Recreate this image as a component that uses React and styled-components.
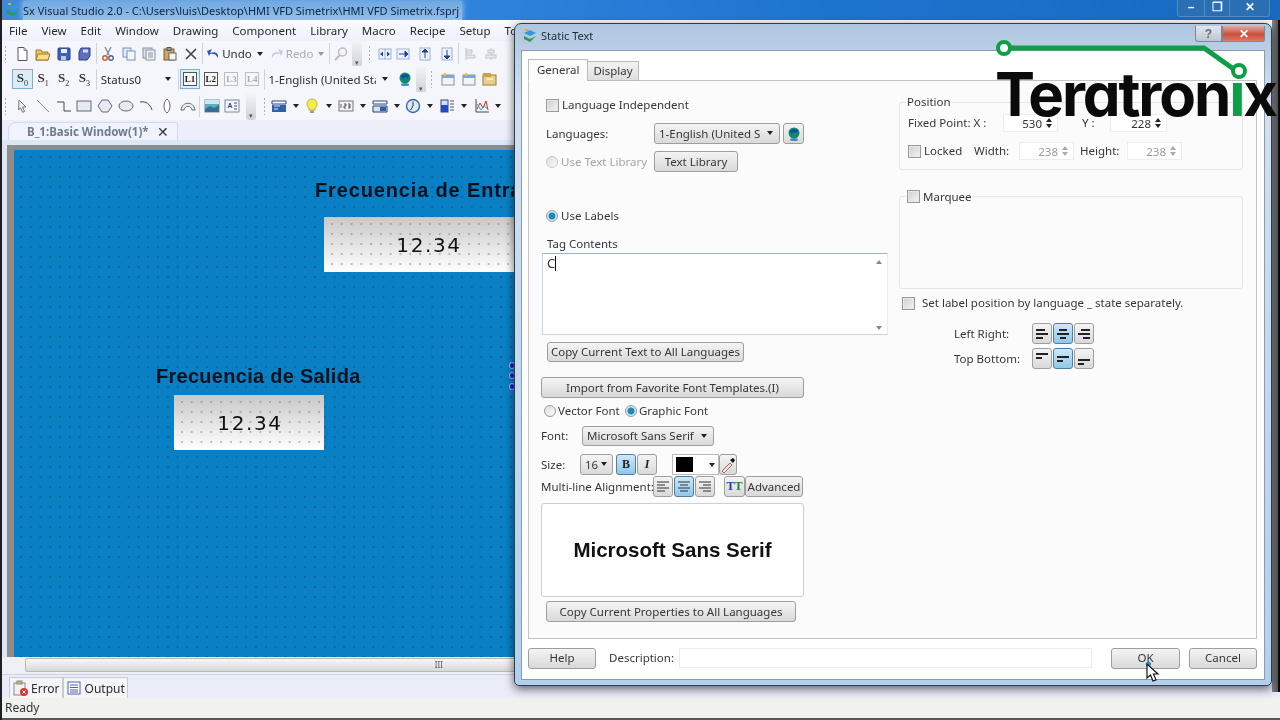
import React from 'react';
import styled, { createGlobalStyle, css } from 'styled-components';

const Global = createGlobalStyle`
  html, body { margin: 0; padding: 0; background: #f1f1f1; }
  body { font-family: "Noto Sans", "Liberation Sans", sans-serif; font-size: 11.5px; color: #333; }
  * { box-sizing: border-box; }
`;

const Screen = styled.div`
  position: relative; width: 1280px; height: 720px; overflow: hidden; background: #eef0fa; filter: blur(0.35px);
`;
const MainWindow = styled.div`
  display: flex; flex-direction: column; width: 1280px; height: 720px; border-left: 2px solid #1c1f24;
`;
const RightEdge = styled.div`
  position: absolute; left: 1272px; top: 20px; width: 8px; height: 672px;
  background: linear-gradient(90deg, #8a8a8a 0, #55585c 70%, #0c0c0c 78%);
`;
const TitleBar = styled.div`
  height: 20px; flex: none; display: flex; align-items: center; gap: 2px; padding-left: 3px;
  background: linear-gradient(90deg, #3d8ad6 0%, #2f84dc 35%, #1d74cf 65%, #1769bf 100%);
  color: #10233c; font-size: 11px;
`;
const TitleText = styled.span`
  background: linear-gradient(#7eb0e2cc, #a9cdf0cc); padding: 0 3px 0 0; line-height: 19px; box-shadow: 0 0 6px #a9cdf0;
`;
const WinButtons = styled.div`
  position: absolute; top: 0; right: 10px; height: 17px; display: flex; color: #eef4fc; font: 700 12px "Liberation Sans", sans-serif;
  background: #2a6fb2; border: 1px solid #4f8cc6; border-top: 0; border-radius: 0 0 3px 3px;
`;
const WinBtn = styled.span`
  width: ${p => p.$w}px; text-align: center; line-height: 15px; border-left: 1px solid #4f8cc6;
  &:first-child { border-left: 0; }
`;
const MenuBar = styled.div`
  height: 21px; flex: none; display: flex; align-items: center; padding-left: 7px; gap: 14px;
  background: linear-gradient(#fafbff, #eff1fa); font-size: 11.5px; color: #26282c;
`;
const ToolRow = styled.div`
  height: ${p => p.$h}px; flex: none; display: flex; align-items: center; padding-left: ${p => p.$pl ?? 2}px;
  background: #f5f6fb;
`;
const Tool = styled.div`
  width: ${p => p.$w || 20.7}px; height: 20px; flex: none; display: flex; align-items: center; justify-content: center;
  ${p => p.$active && css`background: #dcedfa; border: 1px solid #7fb0d4;`}
  ${p => p.$off && css`opacity: .35;`}
`;
const Sep = styled.div`width: 1px; height: 21px; background: #cfd3dc; margin: 0 ${p => p.$m ?? 1}px; flex: none;`;
const Grip = styled.div`
  width: 3px; height: 18px; margin: 0 5px 0 ${p => p.$l ?? 4}px; flex: none;
  background-image: radial-gradient(circle, #a8adb8 0.8px, transparent 1px); background-size: 3px 4px;
`;
const Over = styled.div`
  width: 10px; height: 27px; flex: none; background: linear-gradient(#f3f4f8, #d0d2d8); border-radius: 0 0 3px 3px; margin-left: ${p => p.$l ?? 0}px;
  display: flex; align-items: flex-end; justify-content: center; font-size: 7px; color: #555; line-height: 9px;
`;
const ToolText = styled.span`
  flex: none; font-size: 11.5px; color: ${p => p.$off ? '#a9abb2' : '#2a2c30'}; width: ${p => p.$w ? p.$w + 'px' : 'auto'}; overflow: hidden; white-space: nowrap; padding-left: ${p => p.$pl || 0}px;
`;
const Caret = styled.span`
  flex: none; width: 0; height: 0; border: 3px solid transparent; border-top: 4px solid ${p => p.$c || '#222'}; border-bottom: 0;
  margin: 0 ${p => p.$r ?? 5}px 0 ${p => p.$l ?? 5}px;
`;
const DocTabRow = styled.div`height: 20px; flex: none; background: #eceffa; padding: 2px 0 0 6px;`;
const DocTab = styled.div`
  width: 170px; height: 18px; background: #f0f3fb; border: 1px solid #cfdcee; border-bottom: 0; border-radius: 8px 3px 0 0;
  display: flex; align-items: center; padding-left: 18px; gap: 8px; font-weight: 700; font-size: 11.5px; color: #6f7c8f; white-space: nowrap;
  span:last-child { color: #333; font-weight: 400; font-size: 14px; }
`;
const CanvasFrame = styled.div`
  height: 517px; flex: none; margin: 0; background: #dce6f5; padding: 5px 0 0 5px;
`;
const CanvasGrey = styled.div`height: 512px; background: #8d8d8d; padding: 5px 0 0 7px;`;
const Canvas = styled.div`
  position: relative; height: 507px; background-color: #0a80c4; overflow: hidden;
  background-image: radial-gradient(circle, #07598c 0.55px, transparent 0.95px); background-size: 9.8px 10px; background-position: 2px 2px;
`;
const CanvasLabel = styled.div`
  position: absolute; left: ${p => p.$x}px; top: ${p => p.$y}px; white-space: nowrap;
  font: 700 20px "Liberation Sans", sans-serif; color: #04111d; letter-spacing: ${p => p.$ls ?? 0.28}px;
`;
const Display = styled.div`
  position: absolute; left: ${p => p.$x}px; top: ${p => p.$y}px; width: ${p => p.$w}px; height: 55px;
  display: flex; align-items: center; justify-content: center; padding: 1px 0 0 2px;
  font: 400 20px "DejaVu Sans", sans-serif; letter-spacing: 1.6px; color: #111;
  background-image: radial-gradient(circle, #6c7076 0.5px, transparent 0.85px), linear-gradient(#c8c8c8, #ffffff);
  background-size: 9.8px 10px, 100% 100%; background-position: 3px 2px, 0 0;
`;
const Handle = styled.div`
  position: absolute; left: 495px; top: ${p => p.$y}px; width: 6px; height: 7px; border-radius: 50%; background: #1418c8; border: 1px solid #9fb4ff;
`;
const HScroll = styled.div`
  height: 18px; flex: none; background: #eef0f6; padding: 1px 0 0 23px; border-bottom: 1px solid #c5d7ef;
`;
const HThumb = styled.div`
  height: 14px; background: linear-gradient(#f7f7f7, #d8d8d8); border: 1px solid #b8b8b8; border-radius: 2px;
  display: flex; align-items: center; justify-content: flex-end; padding-right: 836px; font-size: 8px; color: #555; line-height: 10px;
`;
const OutTabs = styled.div`height: 23px; flex: none; display: flex; padding: 2px 0 0 7px; background: #eaecf9;`;
const OutTab = styled.div`
  display: flex; align-items: center; gap: 3px; height: 21px; padding: 0 2px; border: 1px solid #c9cbd4; border-width: 1px 1px 0 1px; background: #f4f5f9;
  font-size: 12px; color: #2a2c30;
`;
const StatusBar = styled.div`height: 20px; flex: none; padding: 0 0 0 3px; line-height: 20px; background: #f1f1ee; font-size: 12px; color: #33353a;`;
const StatusEdge = styled.div`flex: 1; background: #55585c;`;

const Dialog = styled.div`
  position: absolute; left: 514px; top: 23px; width: 758px; height: 663px; display: flex; flex-direction: column;
  border: 1px solid #2d3e52; border-radius: 7px 7px 5px 5px; padding: 0 6px 5px;
  background: linear-gradient(#aec6e0, #d2e0ee 12%, #b2d0ee 100%);
  box-shadow: 0 3px 10px rgba(0,0,0,.6);
`;
const DlgTitle = styled.div`height: 26px; flex: none; display: flex; align-items: center; gap: 3px; padding: 0 0 3px 1px; font-size: 11px; color: #1f2933;`;
const DlgCtrl = styled.div`position: absolute; right: 6px; top: 2px; display: flex; height: 16px;`;
const CtrlBtn = styled.div`
  width: ${p => p.$w}px; display: flex; align-items: center; justify-content: center; color: #fff; font: 700 12px "Liberation Sans", sans-serif;
  border: 1px solid #7b8796; border-top: 0; border-radius: ${p => p.$r};
  background: ${p => p.$red ? 'linear-gradient(#e9a79c, #c9503c 55%, #d97b68)' : 'linear-gradient(#dfe6ee, #bcc6d2)'};
  color: ${p => p.$red ? '#fff' : '#667'};
`;
const Client = styled.div`
  flex: 1; min-height: 0; background: #fff; border: 1px solid #8a9bad; padding: 8px 7px 0 6px; display: flex; flex-direction: column;
`;
const TabStrip = styled.div`display: flex; height: 22px; flex: none; align-items: flex-end; position: relative; z-index: 1; margin-bottom: -1px;`;
const Tab = styled.div`
  height: ${p => p.$on ? 22 : 20}px; padding: 0 ${p => p.$on ? 8 : 5}px 2px; display: flex; align-items: center; font-size: 11.5px; color: #33363a;
  border: 1px solid #bbb; border-bottom: ${p => p.$on ? '1px solid #fbfbfb' : '1px solid #bbb'};
  background: ${p => p.$on ? '#fbfbfb' : 'linear-gradient(#f3f3f3, #dedede)'}; margin-left: ${p => p.$on ? 0 : -1}px;
`;
const Pane = styled.div`
  height: 559px; flex: none; border: 1px solid #c4c4c4; background: #fbfbfb; display: flex;
`;
const LeftCol = styled.div`width: 370px; flex: none; display: flex; flex-direction: column; padding: 0 0 0 12px;`;
const RightCol = styled.div`width: 344px; flex: none; display: flex; flex-direction: column; padding-top: 15px;`;
const Row = styled.div`
  display: flex; align-items: center; height: ${p => p.$h}px; margin-top: ${p => p.$t || 0}px; padding-left: ${p => p.$l || 0}px; flex: none;
`;
const Text = styled.span`
  flex: none; white-space: nowrap; font-size: 11.5px; line-height: 15px; padding-bottom: 1px; color: ${p => p.$off ? '#a4a6aa' : '#33363a'};
  ${p => p.$w && css`width: ${p.$w}px;`} margin-left: ${p => p.$m || 0}px;
`;
const CheckBox = styled.span`
  flex: none; width: 13px; height: 13px; border: 1px solid #9a9a9a; background: linear-gradient(135deg, #cfcfcf, #f4f4f4); box-shadow: inset 0 0 0 1px #e8e8e8;
  margin-right: ${p => p.$r ?? 4}px;
`;
const RadioDot = styled.span`
  flex: none; width: 12px; height: 12px; border-radius: 50%; border: 1px solid ${p => p.$off ? '#c8c8c8' : '#9a9a9a'}; margin: 0 ${p => p.$r ?? 3}px 0 ${p => p.$l || 0}px;
  background: ${p => p.$on ? 'radial-gradient(circle, #1b8bb8 0 3px, #d8e8f0 4px)' : 'linear-gradient(135deg,#ddd,#fafafa)'};
`;
const Btn = styled.div`
  flex: none; width: ${p => p.$w}px; height: ${p => p.$h || 21}px; margin-left: ${p => p.$m || 0}px; display: flex; align-items: center; justify-content: center;
  border: 1px solid #9e9e9e; border-radius: 3px; background: linear-gradient(#f4f4f4, #d9d9d9); font-size: 11.5px; padding-bottom: 1px; color: #33363a; white-space: nowrap;
  ${p => p.$on && css`background: linear-gradient(#cfe8f8, #8fc8ea); border-color: #4e7fa0;`}
`;
const Select = styled(Btn)`justify-content: space-between; padding: 0 5px 1px 4px; overflow: hidden;`;
const TextBox = styled.div`
  flex: none; width: 346px; height: 82px; margin-left: 1px; background: #fff; border: 1px solid #c9d6e4; border-top-color: #9cb4cc; border-right-color: #ececec;
  display: flex; justify-content: space-between; padding: 2px 5px 4px 4px;
`;
const TypeText = styled.span`font-size: 13px; line-height: 15px; height: 15px; color: #333; border-right: 1px solid #111;`;
const ScrollArrows = styled.div`display: flex; flex-direction: column; justify-content: space-between; padding-top: 4px;`;
const Arrow = styled.span`
  display: block; width: 0; height: 0; border: 3px solid transparent;
  ${p => p.$up ? 'border-bottom: 4px solid #888; border-top: 0;' : 'border-top: 4px solid #888; border-bottom: 0;'}
`;
const Preview = styled.div`
  flex: none; width: 263px; height: 94px; display: flex; align-items: center; justify-content: center;
  background: #fff; border: 1px solid #cfcfcf; border-radius: 3px; font: 700 20.5px "Liberation Sans", sans-serif; color: #111;
`;
const Group = styled.fieldset`
  margin: ${p => p.$t || 0}px 0 0; padding: 0 0 0 8px; width: 344px; height: ${p => p.$h}px; border: 1px solid #e5e5e5; border-radius: 3px; flex: none; min-width: 0;
  legend { padding: 0 1px; margin-left: -2px; font-size: 11.5px; line-height: 12px; color: #33363a; display: flex; align-items: center; }
`;
const Spin = styled.div`
  flex: none; width: ${p => p.$w}px; height: 18px; margin-left: ${p => p.$m || 0}px; display: flex; align-items: center; justify-content: flex-end; gap: 4px;
  padding-right: 4px; background: #fff; border: 1px solid #ededed; font-size: 11.5px; color: ${p => p.$off ? '#9a9a9a' : '#333'};
`;
const SpinArrows = styled.span`display: flex; flex-direction: column; gap: 2px; width: 7px;`;
const SmallUp = styled.span`
  display: block; width: 0; height: 0; border: 3.5px solid transparent;
  ${p => p.$up ? `border-bottom: 4px solid ${p.$c}; border-top: 0;` : `border-top: 4px solid ${p.$c}; border-bottom: 0;`}
`;
const BtnGroup = styled.div`display: flex; gap: 1px; margin-left: ${p => p.$m || 0}px; flex: none;`;
const IconBtn = styled(Btn)`width: ${p => p.$w || 20}px; padding: 0;`;
const ColorBtn = styled.div`
  flex: none; width: 47px; height: 21px; margin-left: 15px; background: #fff; border: 1px solid #bbb; display: flex; align-items: center; padding-left: 3px; gap: 8px;
`;
const Swatch = styled.div`width: 17px; height: 15px; background: #000;`;
const SerifMark = styled.span`
  font: ${p => p.$i ? 'italic ' : ''}700 12px "Liberation Serif", serif; color: ${p => p.$c || '#222'};
`;
const Footer = styled.div`display: flex; align-items: center; height: 22px; margin-top: 8px; flex: none;`;
const DescInput = styled.div`width: 413px; height: 20px; margin-left: 0; background: #fff; border: 1px solid #ececec; flex: none;`;
const Logo = styled.div`position: absolute; left: 995px; top: 38px; width: 285px; height: 90px;`;
const LogoWord = styled.div`
  position: absolute; left: 0; top: 26px; font: 700 60px/1 "Inter", "Liberation Sans", sans-serif; color: #0a0a0a; letter-spacing: -2.1px;
  font-feature-settings: "cv11" 1; white-space: nowrap;
  span { color: #0f9e48; }
`;
const LogoLine = styled.svg`position: absolute; left: 0; top: 0; z-index: 1;`;
const Pointer = styled.svg`position: absolute; left: 1146px; top: 661px;`;

const I = ({ n }) => {
  const g = {
    doc: <><path d="M4 1.500h6l3 3v10H4z" fill="#fff" stroke="#555"/><path d="M10 1.500v3h3" fill="none" stroke="#888"/></>,
    open: <><path d="M1 4h5l1 2h6v8H1z" fill="#e8c66a" stroke="#a07a25"/><path d="M3 8h12l-2 6H1z" fill="#f6dc8c" stroke="#a07a25"/></>,
    save: <><rect x="2" y="2" width="12" height="12" rx="1" fill="#3f5fb8" stroke="#27407f"/><rect x="5" y="3" width="6" height="4" fill="#e8eefb"/><rect x="5" y="10" width="5" height="4" fill="#b8c6e8"/></>,
    saveall: <><path d="M5 2h9v8l-3 4H3V6z" fill="#5a6fc0" stroke="#2d3f85"/><rect x="7" y="3.500" width="5" height="3" fill="#d6def5"/></>,
    cut: <><path d="M5 1l4 8M11 1L7 9" stroke="#7f8aa0" strokeWidth="1.400"/><circle cx="5" cy="12" r="2.200" fill="none" stroke="#c05b2a" strokeWidth="1.400"/><circle cx="11" cy="12" r="2.200" fill="none" stroke="#4d5f9a" strokeWidth="1.400"/></>,
    copy: <><rect x="2" y="2" width="8" height="9" fill="#dfe9f7" stroke="#7b93b8"/><rect x="6" y="5" width="8" height="9" fill="#f2f6fd" stroke="#7b93b8"/></>,
    copy2: <><rect x="2" y="2" width="9" height="10" fill="#d9dee8" stroke="#8a93a6"/><rect x="5" y="4" width="9" height="10" fill="#eef0f6" stroke="#8a93a6"/><path d="M7 7h5M7 9h5M7 11h5" stroke="#8a93a6"/></>,
    paste: <><rect x="2" y="3" width="10" height="11" fill="#c8a862" stroke="#7a5c22"/><rect x="5" y="1.500" width="4" height="3" fill="#999" stroke="#555"/><rect x="7" y="7" width="7" height="7" fill="#f5f5f5" stroke="#666"/></>,
    x: <path d="M3 3l10 10M13 3L3 13" stroke="#444" strokeWidth="1.600"/>,
    undo: <path d="M13 12c1-5-3-7-8-5L7 3 2 5l2 5 1-2c4-1 6 0 8 4z" fill="#2f55a8"/>,
    redo: <path d="M3 12c-1-5 3-7 8-5L9 3l5 2-2 5-1-2c-4-1-6 0-8 4z" fill="#c3cddd"/>,
    find: <><circle cx="9.500" cy="6" r="4" fill="#f4f4f4" stroke="#bbb" strokeWidth="1.400"/><path d="M7 9l-5 5" stroke="#bbb" strokeWidth="2"/></>,
    ah: <><rect x="2" y="3" width="12" height="10" fill="#eef3fb" stroke="#9db1d0"/><path d="M8 3v10" stroke="#9db1d0"/><path d="M3 8l3-2.500v5zM13 8l-3-2.500v5z" fill="#23439a"/></>,
    ar: <><rect x="2" y="3" width="12" height="10" fill="#eef3fb" stroke="#9db1d0"/><path d="M4 8h6M13 8l-3-3v6z" stroke="#23439a" fill="#23439a"/></>,
    au: <><rect x="3" y="2" width="10" height="12" fill="#eef3fb" stroke="#9db1d0"/><path d="M8 5v7M8 3L5 6h6z" stroke="#23439a" fill="#23439a"/></>,
    ad: <><rect x="3" y="2" width="10" height="12" fill="#eef3fb" stroke="#9db1d0"/><path d="M8 4v7M8 13l-3-3h6z" stroke="#23439a" fill="#23439a"/></>,
    fa: <path d="M3 2v12M3 4h6v3H3M3 9h9v3H3" fill="#e6e8ee" stroke="#c0c4cc"/>,
    fb: <><path d="M8 2v12" stroke="#c0c4cc"/><rect x="5" y="4" width="6" height="3" fill="#e6e8ee" stroke="#c0c4cc"/><rect x="3" y="9" width="10" height="3" fill="#e6e8ee" stroke="#c0c4cc"/></>,
    win: <><rect x="2" y="4" width="12" height="10" fill="#f4f4f2" stroke="#8a8f98"/><rect x="2" y="4" width="12" height="3" fill="#7da6d6"/><path d="M5 1.500l2 2-2 2-2-2z" fill="#f2c23c"/></>,
    folder: <><rect x="2" y="4" width="13" height="10" fill="#e8d08c" stroke="#9a7c30"/><rect x="2" y="2" width="8" height="4" fill="#c9a24a"/><path d="M6 8h6" stroke="#fff"/></>,
    cursor: <path d="M5 2l7 7H8.500l2 4.500-2 .8-2-4.500L4.500 12z" fill="#f0f0f0" stroke="#777"/>,
    line: <path d="M2 2l12 12" stroke="#888"/>,
    step: <path d="M1 4h7v9h7" fill="none" stroke="#444"/>,
    rect: <rect x="1" y="3" width="14" height="10" fill="#e5ebf4" stroke="#666"/>,
    hex: <path d="M5 2h6l4 6-4 6H5L1 8z" fill="#e5ebf4" stroke="#666"/>,
    ell: <ellipse cx="8" cy="8" rx="7" ry="5" fill="#e5ebf4" stroke="#666"/>,
    arc: <path d="M2 4c6-1 10 2 12 8" fill="none" stroke="#444"/>,
    dia: <path d="M8 1c4 3 4 11 0 14-4-3-4-11 0-14z" fill="#fff" stroke="#666"/>,
    arc2: <path d="M1 12C2 3 14 3 15 12h-3C11 7 5 7 4 12z" fill="#eef1f6" stroke="#666"/>,
    img: <><rect x="1" y="2" width="14" height="12" fill="#5bb0c9" stroke="#7a8a9a"/><path d="M1 11l5-3 4 2 5-3v7H1z" fill="#35708f"/><rect x="1" y="2" width="14" height="4" fill="#cfe6ee"/></>,
    txt: <><rect x="1" y="2" width="14" height="12" fill="#f3f5f9" stroke="#7a8a9a"/><path d="M4 10l2-5 2 5M4.800 8.500h2.500M10 5h3M10 8h3M10 11h3" stroke="#2c4d8a" fill="none"/></>,
    hhh: <><path d="M1 3h14v3H1z" fill="#fff" stroke="#29447f"/><rect x="1" y="7" width="14" height="7" fill="#2f60b0"/><path d="M3 8h6M3 11h4" stroke="#d9e6f7"/></>,
    bulb: <><path d="M8 1a5 5 0 0 1 3 9v2H5v-2a5 5 0 0 1 3-9z" fill="#f6ec50" stroke="#c7b52a"/><rect x="6" y="12.500" width="4" height="2.500" fill="#999"/></>,
    num: <><rect x="1" y="3" width="14" height="10" fill="#f3f3f3" stroke="#777"/><path d="M3 6v4M6 6h2v2H6v2h2M10 6h2v4h-2M10 8h2" stroke="#333" fill="none" strokeWidth=".8"/></>,
    hhh2: <><path d="M1 3h14v3H1z" fill="#fff" stroke="#29447f"/><path d="M1 8h14v6H1z" fill="#d8e1ef" stroke="#29447f"/><rect x="8" y="9" width="6" height="4" fill="#2f60b0"/></>,
    clock: <><circle cx="8" cy="8" r="6.500" fill="#dce9f8" stroke="#2f6aa8" strokeWidth="1.400"/><path d="M8 3.500V8l-2.500 4" fill="none" stroke="#333"/></>,
    bar: <><rect x="1" y="2" width="7" height="12" fill="#d8e2f5" stroke="#28459a"/><rect x="1" y="7" width="7" height="7" fill="#2448c2"/><path d="M10 3h4M10 6h4M10 9h4M10 12h4" stroke="#555"/></>,
    chart: <><path d="M2 1v13h13" fill="none" stroke="#444"/><path d="M3 11l3-6 3 5 3-7 2 9" fill="none" stroke="#d22"/><path d="M3 6l4 6 3-4 4 3" fill="none" stroke="#2aa"/></>,
    globe: <><circle cx="8" cy="7" r="5.500" fill="#118a68"/><path d="M4 5a5 3 0 0 1 8-1l-1 3-4-1-1 3z" fill="#0a4fb0"/><ellipse cx="8" cy="13.500" rx="4" ry="1.500" fill="#3e8bd8"/></>,
    logo: <><path d="M8 2l6 3-6 3-6-3z" fill="#2f9ad6"/><path d="M2 8l6 3 6-3-6 6-6-3z" fill="#2a9a4e"/><path d="M3 1h3v2H3z" fill="#e8a83a"/></>,
    errpad: <><rect x="2" y="3" width="11" height="12" fill="#f1f1f1" stroke="#888"/><rect x="5" y="1" width="5" height="3" fill="#cdb26d" stroke="#888"/><circle cx="12" cy="12" r="4" fill="#d33"/><path d="M10.500 10.500l3 3M13.500 10.500l-3 3" stroke="#fff"/></>,
    list: <><rect x="2" y="2" width="12" height="12" fill="#fff" stroke="#4a63ab"/><path d="M4 5h8M4 7.500h8M4 10h8M4 12h8" stroke="#4a63ab"/></>,
    al: <path d="M2 3h12M2 6h8M2 9h12M2 12h8" stroke="#333"/>,
    ac: <path d="M2 3h12M4 6h8M2 9h12M4 12h8" stroke="#333"/>,
    ar2: <path d="M2 3h12M6 6h8M2 9h12M6 12h8" stroke="#333"/>,
    lr1: <path d="M2 3h9v2H2zM2 7h12v2H2zM2 11h7v2H2z" fill="#222"/>,
    lr2: <path d="M4 3h8v2H4zM2 7h12v2H2zM5 11h6v2H5z" fill="#222"/>,
    lr3: <path d="M5 3h9v2H5zM2 7h12v2H2zM7 11h7v2H7z" fill="#222"/>,
    tb1: <path d="M2 2h12v2H2zM2 6h6v2H2z" fill="#222"/>,
    tb2: <path d="M2 5h12v2H2zM2 9h6v2H2z" fill="#222"/>,
    tb3: <path d="M2 8h12v2H2zM2 12h6v2H2z" fill="#222"/>,
    pick: <><path d="M2 14L10 6l2 2-8 8z" fill="#f8e2e2" stroke="#a66"/><path d="M10 3l3-2 2 2-2 3z" fill="#111"/></>,
  };
  return <svg width="16" height="16" viewBox="0 0 16 16">{g[n]}</svg>;
};

const SLabel = styled.span`
  font: 700 13px "Liberation Serif", serif; color: #333;
  sub { font-size: 8px; font-weight: 400; }
`;
const LLabel = styled.span`
  width: 14px; height: 14px; border: 1px solid #555; background: #f6f6f6; font: 700 9px/12px "Liberation Serif", serif; text-align: center; color: #222;
`;

const Chk = ({ children, r }) => <><CheckBox $r={r} />{children}</>;

export default function App() {
  return (
    <Screen>
      <Global />
      <MainWindow>
        <TitleBar><I n="logo" /><TitleText>Sx Visual Studio 2.0 - C:\Users\luis\Desktop\HMI VFD Simetrix\HMI VFD Simetrix.fsprj</TitleText></TitleBar>
        <WinButtons><WinBtn $w={26}>–</WinBtn><WinBtn $w={25}>❐</WinBtn><WinBtn $w={40}>✕</WinBtn></WinButtons>
        <MenuBar>
          {['File','View','Edit','Window','Drawing','Component','Library','Macro','Recipe','Setup','Tools'].map(m => <span key={m}>{m}</span>)}
        </MenuBar>
        <ToolRow $h={25}>
          <Grip $l={0} />
          {['doc','open','save','saveall'].map(n => <Tool key={n}><I n={n} /></Tool>)}
          <Sep />
          {['cut','copy','copy2','paste','x'].map(n => <Tool key={n}><I n={n} /></Tool>)}
          <Sep />
          <Tool $w={18}><I n="undo" /></Tool><ToolText>Undo</ToolText><Caret />
          <Tool $w={18}><I n="redo" /></Tool><ToolText $off>Redo</ToolText><Caret $c="#999" />
          <Sep $m={0} />
          <Tool><I n="find" /></Tool>
          <Over $l={1}>▾</Over>
          <Grip $l={6} />
          <Tool $w={17}><I n="ah" /></Tool><Tool $w={20}><I n="ar" /></Tool><Tool $w={24}><I n="au" /></Tool><Tool $w={20}><I n="ad" /></Tool>
          <Sep />
          <Tool $w={21}><I n="fa" /></Tool><Tool><I n="fb" /></Tool>
        </ToolRow>
        <ToolRow $h={26} $pl={10}>
          <Tool $active><SLabel>S<sub>0</sub></SLabel></Tool>
          <Tool><SLabel>S<sub>1</sub></SLabel></Tool><Tool><SLabel>S<sub>2</sub></SLabel></Tool><Tool><SLabel>S<sub>3</sub></SLabel></Tool>
          <Sep />
          <ToolText $w={64} $pl={3}>Status0</ToolText><Caret $l={3} $r={6} />
          <Sep />
          <Tool $active><LLabel>L1</LLabel></Tool><Tool><LLabel>L2</LLabel></Tool><Tool $off><LLabel>L3</LLabel></Tool><Tool $off><LLabel>L4</LLabel></Tool>
          <Sep />
          <ToolText $w={110} $pl={3}>1-English (United Sta</ToolText><Caret $l={6} $r={7} />
          <Tool $w={20}><I n="globe" /></Tool>
          <Over $l={1}>▾</Over>
          <Grip $l={4} />
          <Tool><I n="win" /></Tool><Tool><I n="win" /></Tool><Tool><I n="folder" /></Tool>
        </ToolRow>
        <ToolRow $h={28}>
          <Grip $l={0} />
          {['cursor','line','step','rect','hex','ell','arc','dia','arc2'].map(n => <Tool key={n}><I n={n} /></Tool>)}
          <Sep />
          <Tool><I n="img" /></Tool><Tool><I n="txt" /></Tool>
          <Over $l={3}>▾</Over>
          <Grip $l={7} />
          <Tool $w={16}><I n="hhh" /></Tool><Caret $l={6} $r={3} />
          <Tool $w={20}><I n="bulb" /></Tool><Caret $l={4} $r={4} />
          <Tool $w={20}><I n="num" /></Tool><Caret $l={4} $r={4} />
          <Tool $w={20}><I n="hhh2" /></Tool><Caret $l={4} $r={4} />
          <Tool $w={18}><I n="clock" /></Tool><Caret $l={5} $r={4} />
          <Tool $w={22}><I n="bar" /></Tool><Caret $l={2} $r={4} />
          <Tool $w={22}><I n="chart" /></Tool><Caret $l={2} $r={3} />
        </ToolRow>
        <DocTabRow><DocTab><span>B_1:Basic Window(1)*</span><span>✕</span></DocTab></DocTabRow>
        <CanvasFrame>
          <CanvasGrey>
            <Canvas>
              <CanvasLabel $x={301} $y={29} $ls={0.85}>Frecuencia de Entrada</CanvasLabel>
              <Display $x={310} $y={67} $w={208}>12.34</Display>
              <CanvasLabel $x={142} $y={215}>Frecuencia de Salida</CanvasLabel>
              <Display $x={160} $y={245} $w={150}>12.34</Display>
              <Handle $y={212} /><Handle $y={222} /><Handle $y={233} />
            </Canvas>
          </CanvasGrey>
        </CanvasFrame>
        <HScroll><HThumb>III</HThumb></HScroll>
        <OutTabs>
          <OutTab><I n="errpad" /> Error</OutTab>
          <OutTab><I n="list" /> Output</OutTab>
        </OutTabs>
        <StatusBar>Ready</StatusBar>
        <StatusEdge />
      </MainWindow>

      <RightEdge />

      <Dialog>
        <DlgTitle><I n="logo" />Static Text</DlgTitle>
        <DlgCtrl>
          <CtrlBtn $w={27} $r="0 0 0 3px">?</CtrlBtn>
          <CtrlBtn $w={43} $r="0 0 3px 0" $red>✕</CtrlBtn>
        </DlgCtrl>
        <Client>
          <TabStrip><Tab $on>General</Tab><Tab>Display</Tab></TabStrip>
          <Pane>
            <LeftCol>
              <Row $h={20} $t={14} $l={5}><Chk r={3}><Text>Language Independent</Text></Chk></Row>
              <Row $h={21} $t={8} $l={5}><Text $w={108}>Languages:</Text>
                <Select $w={126}>1-English (United S<Caret $l={2} $r={1} /></Select>
                <IconBtn $w={21} $m={3}><I n="globe" /></IconBtn>
              </Row>
              <Row $h={21} $t={7} $l={5}><RadioDot $off /><Text $off $w={93}>Use Text Library</Text><Btn $w={84}>Text Library</Btn></Row>
              <Row $h={20} $t={34} $l={5}><RadioDot $on /><Text>Use Labels</Text></Row>
              <Row $h={17} $t={9} $l={6}><Text>Tag Contents</Text></Row>
              <Row $h={82} $t={1}>
                <TextBox><TypeText>C</TypeText><ScrollArrows><Arrow $up /><Arrow /></ScrollArrows></TextBox>
              </Row>
              <Row $h={20} $t={7} $l={6}><Btn $w={197} $h={20}>Copy Current Text to All Languages</Btn></Row>
              <Row $h={21} $t={15}><Btn $w={263}>Import from Favorite Font Templates.(I)</Btn></Row>
              <Row $h={18} $t={4} $l={3}><RadioDot $r={2} /><Text $w={67}>Vector Font</Text><RadioDot $on $r={2} /><Text>Graphic Font</Text></Row>
              <Row $h={20} $t={6}><Text $w={41}>Font:</Text><Select $w={132} $h={20}>Microsoft Sans Serif<Caret $l={2} $r={1} /></Select></Row>
              <Row $h={21} $t={8}><Text $w={39}>Size:</Text>
                <Select $w={33}>16<Caret $l={2} $r={0} /></Select>
                <IconBtn $m={3} $on><SerifMark>B</SerifMark></IconBtn>
                <IconBtn $m={1}><SerifMark $i>I</SerifMark></IconBtn>
                <ColorBtn><Swatch /><Caret $l={8} $r={0} /></ColorBtn>
                <IconBtn $w={18}><I n="pick" /></IconBtn>
              </Row>
              <Row $h={21} $t={1}><Text $w={112}>Multi-line Alignment:</Text>
                <BtnGroup><IconBtn><I n="al" /></IconBtn><IconBtn $on><I n="ac" /></IconBtn><IconBtn><I n="ar2" /></IconBtn></BtnGroup>
                <IconBtn $w={21} $m={9}><SerifMark $c="#1a3cc0">T</SerifMark><SerifMark $c="#18863e">T</SerifMark></IconBtn>
                <Btn $w={58}>Advanced</Btn>
              </Row>
              <Row $h={94} $t={6}><Preview>Microsoft Sans Serif</Preview></Row>
              <Row $h={21} $t={4} $l={5}><Btn $w={250}>Copy Current Properties to All Languages</Btn></Row>
            </LeftCol>
            <RightCol>
              <Group $h={74}>
                <legend>Position</legend>
                <Row $h={18} $t={6}><Text $w={95}>Fixed Point: X :</Text>
                  <Spin $w={55}>530<SpinArrows><SmallUp $up $c="#222" /><SmallUp $c="#222" /></SpinArrows></Spin>
                  <Text $w={28} $m={24}>Y :</Text>
                  <Spin $w={57}>228<SpinArrows><SmallUp $up $c="#222" /><SmallUp $c="#222" /></SpinArrows></Spin>
                </Row>
                <Row $h={18} $t={10}><Chk r={3}><Text $w={50}>Locked</Text></Chk><Text $w={45}>Width:</Text>
                  <Spin $w={55} $off>238<SpinArrows><SmallUp $up $c="#aaa" /><SmallUp $c="#aaa" /></SpinArrows></Spin>
                  <Text $w={47} $m={6}>Height:</Text>
                  <Spin $w={55} $off>238<SpinArrows><SmallUp $up $c="#aaa" /><SmallUp $c="#aaa" /></SpinArrows></Spin>
                </Row>
              </Group>
              <Group $h={99} $t={20}>
                <legend><CheckBox $r={3} />Marquee</legend>
              </Group>
              <Row $h={16} $t={6} $l={3}><Chk r={7}><Text>Set label position by language _ state separately.</Text></Chk></Row>
              <Row $h={21} $t={12} $l={55}><Text $w={78}>Left Right:</Text>
                <BtnGroup><IconBtn><I n="lr1" /></IconBtn><IconBtn $on><I n="lr2" /></IconBtn><IconBtn><I n="lr3" /></IconBtn></BtnGroup>
              </Row>
              <Row $h={21} $t={4} $l={55}><Text $w={78}>Top Bottom:</Text>
                <BtnGroup><IconBtn><I n="tb1" /></IconBtn><IconBtn $on><I n="tb2" /></IconBtn><IconBtn><I n="tb3" /></IconBtn></BtnGroup>
              </Row>
            </RightCol>
          </Pane>
          <Footer>
            <Btn $w={68}>Help</Btn>
            <Text $m={13} $w={70}>Description:</Text>
            <DescInput />
            <Btn $w={69} $m={19}>OK</Btn>
            <Btn $w={68} $m={9}>Cancel</Btn>
          </Footer>
        </Client>
      </Dialog>

      <Logo>
        <LogoLine width="285" height="60" viewBox="0 0 285 60">
          <path d="M15 10H209L240 32" fill="none" stroke="#0f9e48" strokeWidth="5" />
          <circle cx="9" cy="10" r="6" fill="#fff" stroke="#0f9e48" strokeWidth="4" />
          <circle cx="244" cy="33" r="6" fill="#fff" stroke="#0f9e48" strokeWidth="4" />
        </LogoLine>
        <LogoWord>Teratron<span>ı</span>x</LogoWord>
      </Logo>

      <Pointer width="14" height="22" viewBox="0 0 14 22">
        <circle cx="2.500" cy="3" r="2.500" fill="#1c8fd0" />
        <path d="M1 3v14l3.500-3 2.500 6 3-1.200-2.500-5.800H12z" fill="#fff" stroke="#111" strokeWidth="1.200" />
      </Pointer>
    </Screen>
  );
}
